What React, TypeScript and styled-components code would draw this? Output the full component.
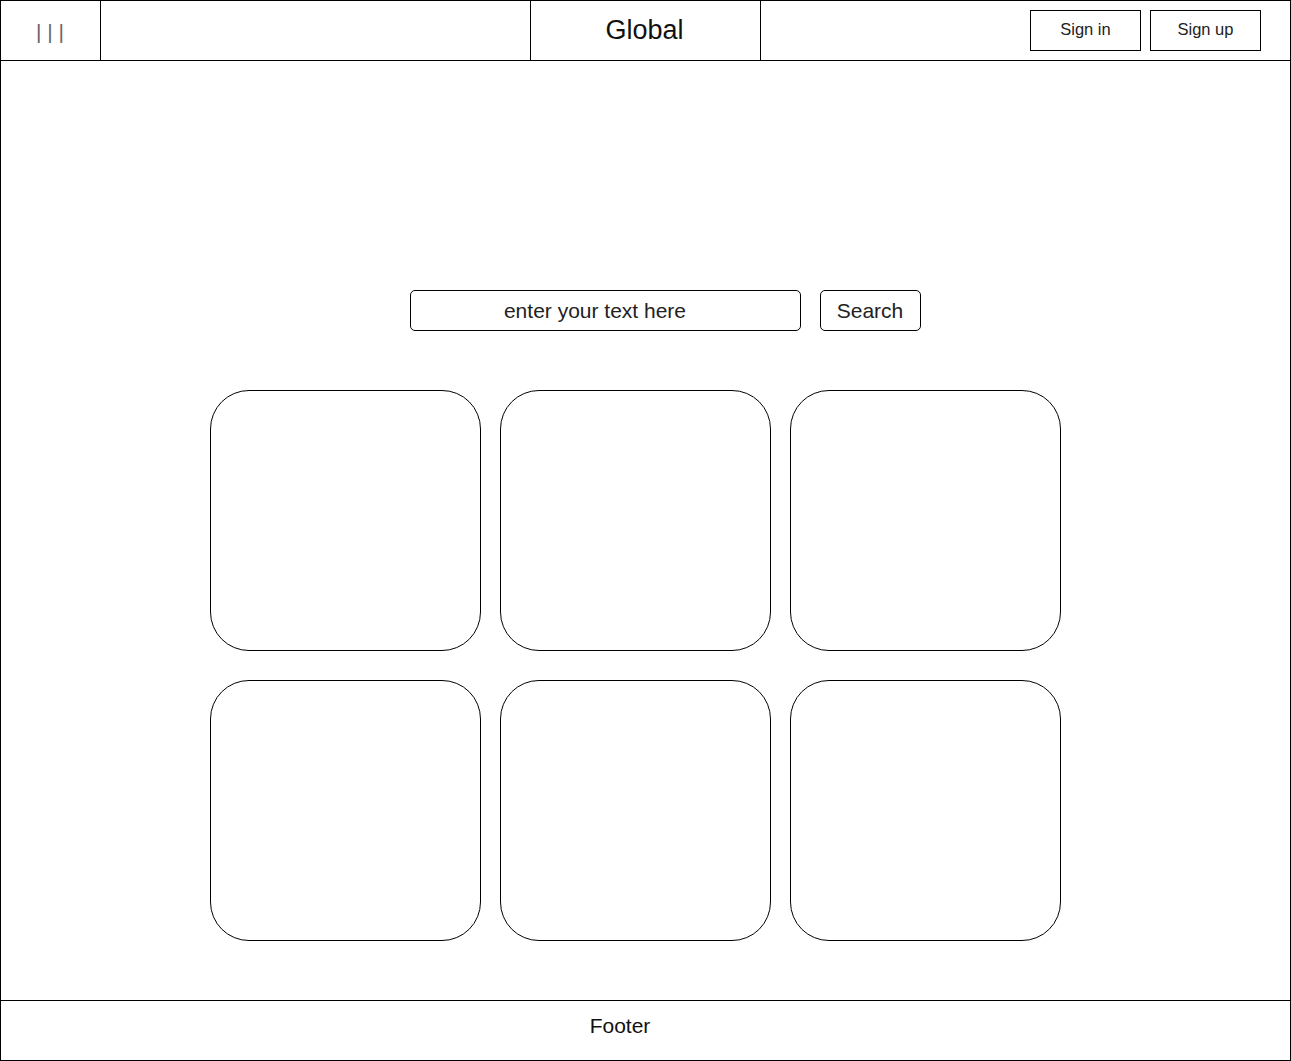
import React from "react";
import styled, { createGlobalStyle } from "styled-components";

const GlobalStyle = createGlobalStyle`
  html, body {
    margin: 0;
    padding: 0;
    background: #ffffff;
  }
  body {
    font-family: "Liberation Sans", Arial, Helvetica, sans-serif;
    color: #000;
  }
  * { box-sizing: border-box; }
`;

const Frame = styled.div`
  width: 1291px;
  height: 1061px;
  border: 1px solid #000;
  display: flex;
  flex-direction: column;
  background: #fff;
`;

const Header = styled.header`
  height: 60px;
  flex: 0 0 60px;
  border-bottom: 1px solid #000;
  display: flex;
`;

const Cell = styled.div<{ $w?: number; $divider?: boolean }>`
  ${(p) => (p.$w ? `flex: 0 0 ${p.$w}px;` : "flex: 1 1 auto;")}
  ${(p) => (p.$divider ? "border-right: 1px solid #000;" : "")}
  display: flex;
  align-items: center;
  justify-content: center;
`;

const MenuGlyph = styled.span`
  font-size: 21px;
  color: #666;
  margin: 2px 1px 0 0;
`;

const Title = styled.span`
  font-size: 27px;
  color: #111;
  margin: 0 2px 1px 0;
`;

const AuthCell = styled.div`
  flex: 1 1 auto;
  display: flex;
  justify-content: flex-end;
  align-items: flex-start;
  gap: 9px;
  padding: 9px 29px 0 0;
`;

const AuthButton = styled.button`
  width: 111px;
  height: 41px;
  border: 1px solid #000;
  background: #fff;
  font-family: "Liberation Sans", Arial, sans-serif;
  font-size: 16.5px;
  color: #222;
  padding: 0 0 2px;
  cursor: pointer;
`;

const Main = styled.main`
  flex: 1 1 auto;
  display: flex;
  flex-direction: column;
  padding: 229px 0 0 209px;
`;

const SearchRow = styled.div`
  display: flex;
  gap: 19px;
  margin-left: 200px;
`;

const SearchInput = styled.div`
  width: 391px;
  height: 41px;
  border: 1px solid #000;
  border-radius: 5px;
  display: flex;
  align-items: center;
  justify-content: center;
  padding: 1px 21px 0 0;
  font-size: 21px;
  color: #222;
`;

const SearchButton = styled.button`
  width: 101px;
  height: 41px;
  border: 1px solid #000;
  border-radius: 5px;
  background: #fff;
  font-family: "Liberation Sans", Arial, sans-serif;
  font-size: 21px;
  color: #222;
  padding: 1px 1px 0 0;
  cursor: pointer;
`;

const CardGrid = styled.div`
  display: grid;
  grid-template-columns: repeat(3, 271px);
  grid-auto-rows: 261px;
  column-gap: 19px;
  row-gap: 29px;
  margin-top: 59px;
`;

const Card = styled.div`
  border: 1px solid #000;
  border-radius: 39px;
  background: #fff;
`;

const Footer = styled.footer`
  height: 60px;
  flex: 0 0 60px;
  border-top: 1px solid #000;
  display: flex;
  align-items: center;
  justify-content: center;
  padding: 0 51px 10px 0;
  font-size: 21px;
  color: #111;
`;

export default function App() {
  return (
    <>
      <GlobalStyle />
      <Frame>
        <Header>
          <Cell $w={100} $divider>
            <MenuGlyph>| | |</MenuGlyph>
          </Cell>
          <Cell $w={430} $divider />
          <Cell $w={230} $divider>
            <Title>Global</Title>
          </Cell>
          <AuthCell>
            <AuthButton>Sign in</AuthButton>
            <AuthButton>Sign up</AuthButton>
          </AuthCell>
        </Header>
        <Main>
          <SearchRow>
            <SearchInput>enter your text here</SearchInput>
            <SearchButton>Search</SearchButton>
          </SearchRow>
          <CardGrid>
            {Array.from({ length: 6 }).map((_, i) => (
              <Card key={i} />
            ))}
          </CardGrid>
        </Main>
        <Footer>Footer</Footer>
      </Frame>
    </>
  );
}
